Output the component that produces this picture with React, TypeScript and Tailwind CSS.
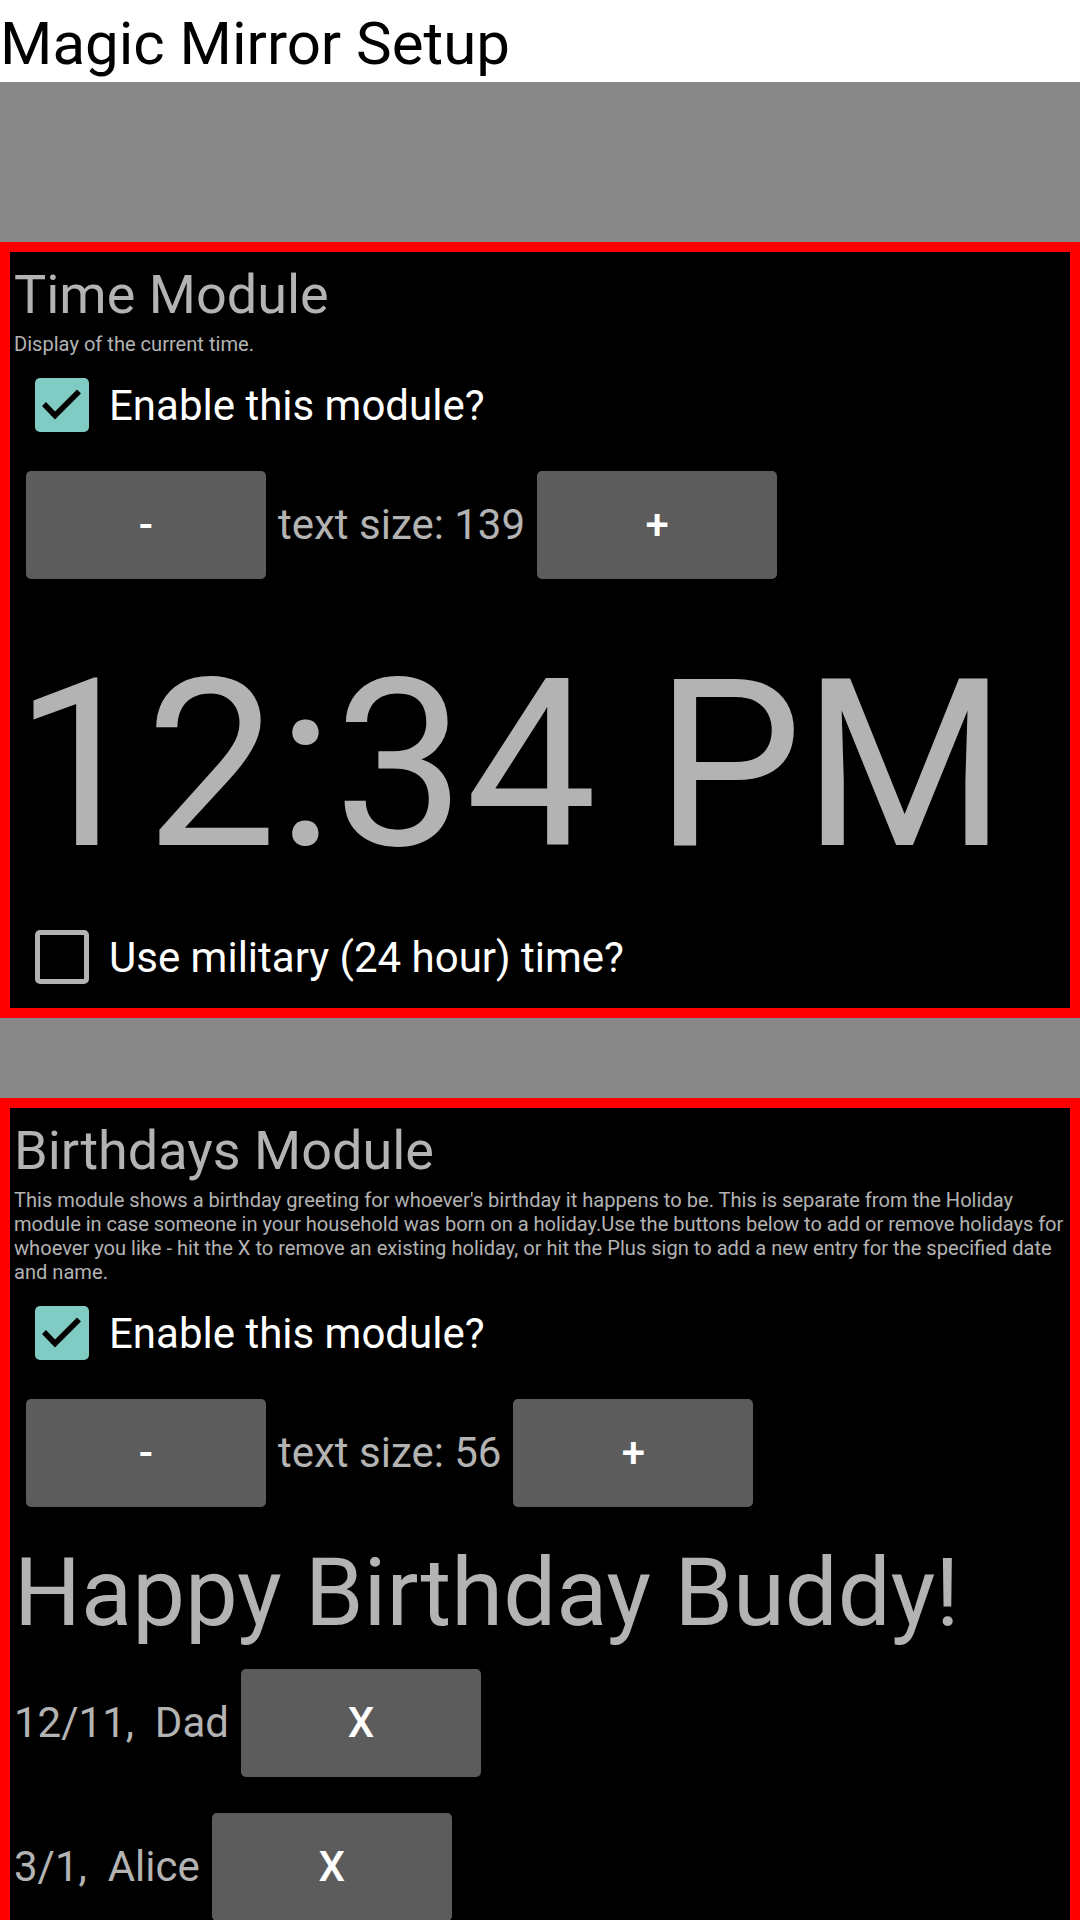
import React from "react";

function CheckedBox() {
  return (
    <div className="w-[54px] h-[54px] rounded-[5px] bg-[#80cbc4] shrink-0 flex items-center justify-center">
      <svg width="54" height="54" viewBox="0 0 54 54">
        <polyline points="9,26 20,37.5 44,13.5" fill="none" stroke="#000" strokeWidth="5.5" strokeLinecap="butt" strokeLinejoin="miter" />
      </svg>
    </div>
  );
}

function EmptyBox() {
  return <div className="w-[54px] h-[54px] rounded-[5px] border-[5px] border-[#b3b3b3] shrink-0" />;
}

function GrayButton({ label, className = "" }: { label: string; className?: string }) {
  return (
    <div
      className={`w-[240px] h-[108px] rounded-[5px] bg-[#5c5c5c] flex items-center justify-center text-white text-[42px] font-medium leading-[48px] shrink-0 ${className}`}
    >
      {label}
    </div>
  );
}

function CheckRow({ checked, label, className = "" }: { checked: boolean; label: string; className?: string }) {
  return (
    <div className={`flex items-center h-[54px] pl-[21px] ${className}`}>
      {checked ? <CheckedBox /> : <EmptyBox />}
      <span className="ml-[20px] text-white text-[42px] leading-[54px] pt-[2px]">{label}</span>
    </div>
  );
}

function SizeRow({ size, className = "" }: { size: number; className?: string }) {
  return (
    <div className={`flex items-center h-[108px] pl-[12px] ${className}`}>
      <GrayButton label="-" />
      <span className="mx-[12px] text-[#b3b3b3] text-[42px] leading-[50px] whitespace-nowrap">text size: {size}</span>
      <GrayButton label="+" />
    </div>
  );
}

export default function App() {
  return (
    <div className="w-[1080px] h-[1920px] overflow-hidden bg-[#888888] flex flex-col font-[family-name:Roboto,sans-serif]">
      <div className="h-[82px] bg-white pt-[9px] text-[60px] leading-[70px] text-black shrink-0">Magic Mirror Setup</div>

      <div className="mt-[160px] border-[10px] border-[#ff0000] bg-black pl-[4px] pr-[4px] pt-[11px] pb-[24px] shrink-0">
        <div className="text-[54px] leading-[64px] text-[#b3b3b3]">Time Module</div>
        <div className="mt-[5px] text-[20.1px] leading-[24px] text-[#b3b3b3]">Display of the current time.</div>
        <CheckRow checked label="Enable this module?" className="mt-[22px]" />
        <SizeRow size={139} className="mt-[39px]" />
        <div className="mt-[49px] text-[234px] leading-[274px] text-[#b3b3b3] whitespace-nowrap">12:34 PM</div>
        <CheckRow checked={false} label="Use military (24 hour) time?" className="mt-[28px]" />
      </div>

      <div className="mt-[80px] border-[10px] border-[#ff0000] bg-black pl-[4px] pr-[0px] pt-[11px] pb-[40px] shrink-0">
        <div className="text-[54px] leading-[64px] text-[#b3b3b3]">Birthdays Module</div>
        <div className="mt-[5px] text-[20.1px] leading-[24px] text-[#b3b3b3] whitespace-nowrap">
          <div>This module shows a birthday greeting for whoever's birthday it happens to be. This is separate from the Holiday</div>
          <div className="tracking-[-0.05px]">
            module in case someone in your household was born on a holiday.Use the buttons below to add or remove holidays for
          </div>
          <div>whoever you like - hit the X to remove an existing holiday, or hit the Plus sign to add a new entry for the specified date</div>
          <div>and name.</div>
        </div>
        <CheckRow checked label="Enable this module?" className="mt-[22px]" />
        <SizeRow size={56} className="mt-[39px]" />
        <div className="mt-[31px] text-[94px] leading-[110px] text-[#b3b3b3] whitespace-nowrap">Happy Birthday Buddy!</div>

        <div className="mt-[21px] flex items-center h-[108px]">
          <span className="text-[42px] leading-[50px] text-[#b3b3b3] whitespace-pre">12/11,  Dad</span>
          <GrayButton label="X" className="ml-[12px]" />
        </div>
        <div className="mt-[36px] flex items-center h-[108px]">
          <span className="text-[42px] leading-[50px] text-[#b3b3b3] whitespace-pre">3/1,  Alice</span>
          <GrayButton label="X" className="ml-[12px]" />
        </div>
      </div>
    </div>
  );
}
